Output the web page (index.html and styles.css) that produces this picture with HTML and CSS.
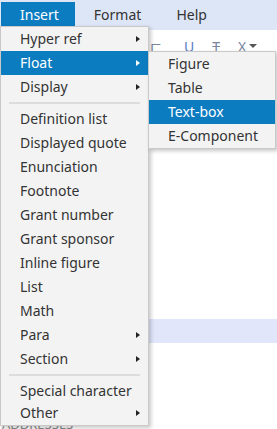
FILE: index.html
```html
<!DOCTYPE html>
<html lang="en">
<head>
    <meta charset="UTF-8">
    <meta name="viewport" content="width=device-width, initial-scale=1.0">
    <title>Editor - Insert menu</title>
    <link rel="stylesheet" href="styles.css">
</head>
<body>
    <div class="app">
        <nav class="menubar">
            <span class="menubar-item active">Insert</span>
            <span class="menubar-item">Format</span>
            <span class="menubar-item">Help</span>
        </nav>
        <div class="toolbar">
            <span class="tool">&#8847;</span>
            <span class="tool tool-u">U</span>
            <span class="tool tool-s">T</span>
            <span class="tool tool-x">X<span class="caret"></span></span>
        </div>
        <div class="editor">
            <div class="editor-row selected"></div>
            <div class="editor-label">ADDRESSES</div>
        </div>

        <ul class="menu main-menu">
            <li class="menu-item has-sub">Hyper ref</li>
            <li class="menu-item has-sub active">Float</li>
            <li class="menu-item has-sub">Display</li>
            <li class="menu-sep"></li>
            <li class="menu-item">Definition list</li>
            <li class="menu-item">Displayed quote</li>
            <li class="menu-item">Enunciation</li>
            <li class="menu-item">Footnote</li>
            <li class="menu-item">Grant number</li>
            <li class="menu-item">Grant sponsor</li>
            <li class="menu-item">Inline figure</li>
            <li class="menu-item">List</li>
            <li class="menu-item">Math</li>
            <li class="menu-item has-sub">Para</li>
            <li class="menu-item has-sub">Section</li>
            <li class="menu-sep"></li>
            <li class="menu-item">Special character</li>
            <li class="menu-item has-sub last">Other</li>
        </ul>

        <ul class="menu sub-menu">
            <li class="menu-item">Figure</li>
            <li class="menu-item">Table</li>
            <li class="menu-item active">Text-box</li>
            <li class="menu-item">E-Component</li>
        </ul>
    </div>
</body>
</html>
```

FILE: styles.css
```css
body {
    margin: 0;
    font-family: "Noto Sans", "Open Sans", sans-serif;
    font-size: 14px;
    color: #333;
    background: #fff;
}
.app {
    position: relative;
    height: 429px;
    overflow: hidden;
}
.menubar {
    display: flex;
    height: 28px;
    padding: 2px 0 0 1px;
    background-color: #dde6f7;
}
.menubar-item {
    display: flex;
    align-items: center;
    height: 24px;
    padding: 0 16px 0 19px;
}
.menubar-item.active {
    background-color: #0c7cc1;
    color: #fff;
}
.toolbar {
    display: flex;
    align-items: center;
    gap: 18px;
    height: 24px;
    padding: 4px 0 0 150px;
    color: #7a86a0;
    font-size: 14px;
}
.tool-u {
    color: #5b7cc4;
    margin-left: 4px;
}
.tool-s {
    text-decoration: line-through;
}
.tool-x {
    display: flex;
    align-items: center;
    gap: 3px;
}
.caret {
    width: 0;
    height: 0;
    border-left: 4px solid transparent;
    border-right: 4px solid transparent;
    border-top: 4px solid #555;
}
.editor {
    padding-top: 261px;
}
.editor-row {
    height: 24px;
}
.editor-row.selected {
    background-color: #e1e6fb;
}
.editor-label {
    margin-top: 73px;
    padding-left: 2px;
    color: #888;
    font-size: 13px;
    line-height: 16px;
}

/* dropdown menus */
.menu {
    position: absolute;
    margin: 0;
    padding: 0;
    list-style: none;
    background-color: #f3f3f3;
    border: 1px solid #c9c9c9;
    box-shadow: 2px 2px 4px rgba(0, 0, 0, 0.22);
}
.main-menu {
    left: 0;
    top: 26px;
    width: 147px;
}
.sub-menu {
    left: 148px;
    top: 51px;
    width: 126px;
}
.menu-item {
    position: relative;
    height: 24px;
    line-height: 24px;
    padding-left: 19px;
    white-space: nowrap;
}
.menu-item.last {
    height: 22px;
    line-height: 20px;
}
.menu-item.active {
    background-color: #0c7cc1;
    color: #fff;
}
.menu-item.has-sub::after {
    content: "";
    position: absolute;
    right: 8px;
    top: 9px;
    border-top: 3.5px solid transparent;
    border-bottom: 3.5px solid transparent;
    border-left: 4px solid #222;
}
.menu-item.last::after {
    top: 7px;
}
.menu-item.has-sub.active::after {
    border-left-color: #fff;
}
.menu-sep {
    height: 2px;
    margin: 3px 8px 3px;
    background-color: #dcdcdc;
}
```
